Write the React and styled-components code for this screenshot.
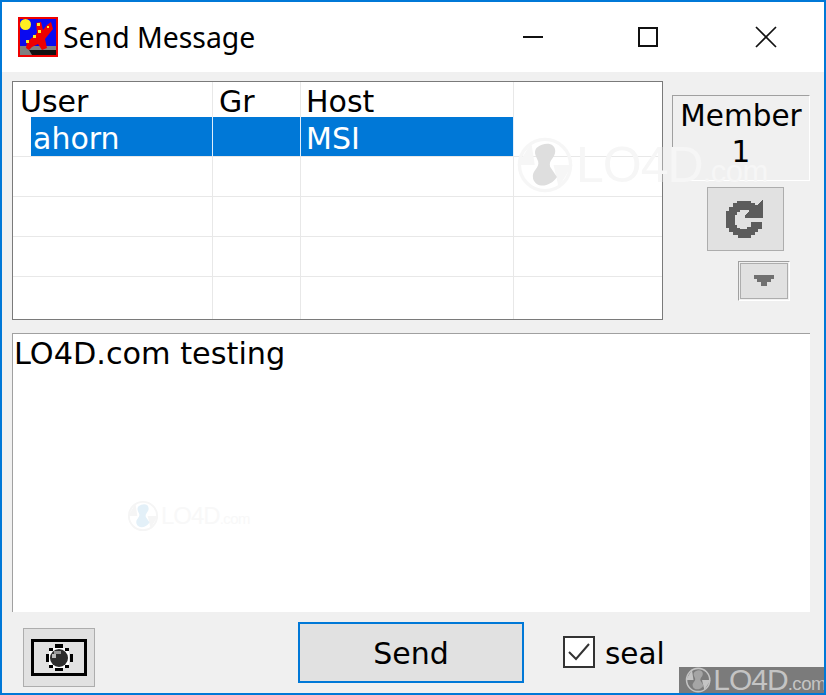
import React from "react";
import styled, { createGlobalStyle } from "styled-components";

const Global = createGlobalStyle`
  html, body { margin: 0; padding: 0; background: #f0f0f0; }
  #root { width: 826px; height: 695px; }
`;

const FONT = `"DejaVu Sans", "Noto Sans", sans-serif`;
const TITLE_FONT = `"Noto Sans", "Open Sans", sans-serif`;

const Win = styled.div`
  position: relative;
  box-sizing: border-box;
  width: 826px;
  height: 695px;
  border: 2px solid #0078d7;
  background: #f0f0f0;
  overflow: hidden;
  font-family: ${FONT};
  color: #000;
  display: flex;
  flex-direction: column;
`;
const TitleBar = styled.div`
  height: 70px;
  background: #fff;
  display: flex;
  align-items: center;
  flex: none;
`;
const AppIcon = styled.svg`
  width: 40px;
  height: 40px;
  margin-left: 16px;
  flex: none;
`;
const Title = styled.div`
  font-family: ${TITLE_FONT};
  font-size: 28.4px;
  line-height: 40px;
  margin-left: 5px;
  flex: 1;
`;
const WinButton = styled.div`
  width: 116px;
  height: 70px;
  display: flex;
  align-items: center;
  justify-content: center;
  padding-right: ${p => p.$shift}px;
  box-sizing: border-box;
`;
const Body = styled.div`
  flex: 1;
  display: flex;
  flex-direction: column;
  padding: 9px 14px 0 10px;
`;
const TopRow = styled.div`
  display: flex;
  height: 239px;
  flex: none;
`;
const Grid = styled.div`
  box-sizing: border-box;
  width: 651px;
  height: 239px;
  border: 1px solid #7a7a7a;
  background: #fff;
  overflow: hidden;
  display: flex;
  flex-direction: column;
`;
const Row = styled.div`
  display: grid;
  grid-template-columns: 200px 88px 213px 1fr;
  grid-template-rows: 1fr;
  flex: none;
  height: ${p => p.$h}px;
  box-sizing: border-box;
  border-bottom: ${p => (p.$line ? "1px solid #e8e8e8" : "none")};
`;
const Cell = styled.div`
  box-sizing: border-box;
  min-height: 0;
  border-right: ${p => (p.$last ? "none" : `1px solid ${p.$sel ? "#dfeefb" : "#e8e8e8"}`)};
  font-size: 30px;
  line-height: ${p => p.$lh}px;
  padding-top: ${p => p.$pt || 0}px;
  padding-left: ${p => p.$pl}px;
  white-space: nowrap;
  color: ${p => (p.$sel ? "#fff" : "#000")};
  background: ${p =>
    p.$sel
      ? p.$indent
        ? "linear-gradient(to right, #fff 18px, #0078d7 18px)"
        : "#0078d7"
      : "transparent"};
`;
const Side = styled.div`
  flex: 1;
  display: flex;
  flex-direction: column;
  padding: 14px 0 0 9px;
`;
const MemberBox = styled.div`
  box-sizing: border-box;
  width: 138px;
  height: 86px;
  border: 1px solid #fff;
  border-top-color: #a0a0a0;
  border-left-color: #a0a0a0;
  text-align: center;
  font-size: 29.5px;
  line-height: 36px;
  padding-top: 2px;
`;
const RefreshButton = styled.div`
  box-sizing: border-box;
  width: 77px;
  height: 64px;
  margin: 6px 0 0 35px;
  padding-right: 3px;
  background: #e1e1e1;
  border: 1px solid #adadad;
  display: flex;
  align-items: center;
  justify-content: center;
`;
const DropFrame = styled.div`
  box-sizing: border-box;
  width: 52px;
  height: 40px;
  margin: 10px 0 0 66px;
  border: 1px solid #fff;
  border-top-color: #a0a0a0;
  border-left-color: #a0a0a0;
  padding: 1px;
`;
const DropInner = styled.div`
  box-sizing: border-box;
  height: 100%;
  background: #e1e1e1;
  border: 1px solid #adadad;
  display: flex;
  align-items: center;
  justify-content: center;
`;
const Memo = styled.div`
  position: relative;
  box-sizing: border-box;
  margin-top: 13px;
  width: 798px;
  height: 279px;
  flex: none;
  background: #fff;
  border-top: 1px solid #a0a0a0;
  border-left: 1px solid #a0a0a0;
  font-size: 30.3px;
  line-height: 40px;
  padding-left: 1px;
`;
const Bottom = styled.div`
  flex: 1;
  display: flex;
  align-items: flex-start;
`;
const CamButton = styled.div`
  box-sizing: border-box;
  width: 72px;
  height: 59px;
  margin: 16px 0 0 11px;
  background: #e1e1e1;
  border: 1px solid #adadad;
  display: flex;
  align-items: center;
  justify-content: center;
`;
const SendButton = styled.div`
  box-sizing: border-box;
  width: 226px;
  height: 61px;
  margin: 10px 0 0 203px;
  padding-top: 2px;
  background: #e1e1e1;
  border: 2px solid #0078d7;
  font-size: 30px;
  display: flex;
  align-items: center;
  justify-content: center;
`;
const CheckWrap = styled.div`
  display: flex;
  align-items: center;
  margin: 24px 0 0 39px;
  height: 32px;
`;
const CheckBox = styled.div`
  box-sizing: border-box;
  width: 32px;
  height: 32px;
  border: 2px solid #333;
  background: #fff;
  display: flex;
  align-items: center;
  justify-content: center;
`;
const CheckLabel = styled.div`
  font-size: 29.5px;
  margin-left: 10px;
  padding-top: 3px;
`;
const Mark = styled.div`
  position: absolute;
  left: ${p => p.$x}px;
  top: ${p => p.$y}px;
  display: flex;
  align-items: center;
  pointer-events: none;
`;
const MarkText = styled.span`
  font-family: "Liberation Sans", sans-serif;
  font-size: ${p => p.$s}px;
  color: ${p => p.$c};
  letter-spacing: -1px;
  margin-left: 2px;
  line-height: 1;
`;
const MarkSmall = styled.span`
  font-size: 0.62em;
  letter-spacing: -0.5px;
`;
const Badge = styled.div`
  position: absolute;
  right: -2px;
  bottom: 0;
  width: 147px;
  height: 26px;
  background: #7b7b7b;
  display: flex;
  align-items: center;
  padding-left: 6px;
  box-sizing: border-box;
`;

const Globe = ({ size, fill, arrow }) => (
  <svg width={size} height={size} viewBox="0 0 34 34">
    <circle cx="17" cy="17" r="15" fill="none" stroke={arrow} strokeWidth="2" />
    <path d="M1 17 L9 4 L11 17 Z M33 17 L25 30 L22 17 Z" fill={arrow} />
    <path d="M12 7 C17 3 23 4 23 9 C23 13 19 14 20 18 L24 24 C20 30 12 31 10 25 C9 20 14 19 13 15 C12 12 10 10 12 7 Z" fill={fill} />
  </svg>
);

const rows = [196, 236, 276];

export default function App() {
  return (
    <Win>
      <Global />
      <TitleBar>
        <AppIcon viewBox="0 0 40 40">
          <rect width="40" height="40" fill="#ee0000" />
          <rect x="2" y="2" width="36" height="36" fill="#0a0af0" />
          <rect x="2" y="29" width="36" height="9" fill="#808080" />
          <circle cx="7.5" cy="7.5" r="5.5" fill="#ffee22" />
          <path d="M11 33 L38 33 L38 38 L14 38 Z" fill="#111" />
          <path d="M8 31 L9 25 L16 19 L19 16 L18 6 L23 5 L25 13 L29 8 L33 5 L35 12 L27 22 L29 31 L24 33 L20 27 L14 30 L11 33 Z" fill="#ee0000" />
          <rect x="19" y="6" width="3" height="3" fill="#ffee22" />
          <rect x="20" y="13" width="3" height="3" fill="#ffee22" />
          <rect x="15" y="18" width="3" height="3" fill="#ffee22" />
          <rect x="8" y="23" width="3" height="3" fill="#ffee22" />
          <rect x="29" y="9" width="2" height="2" fill="#ffee22" />
        </AppIcon>
        <Title>Send Message</Title>
        <WinButton $shift={3}>
          <svg width="22" height="22" viewBox="0 0 22 22"><rect x="1" y="10" width="20" height="2" fill="#111" /></svg>
        </WinButton>
        <WinButton $shift={4}>
          <svg width="22" height="22" viewBox="0 0 22 22"><rect x="2" y="2" width="18" height="18" fill="none" stroke="#111" strokeWidth="2" /></svg>
        </WinButton>
        <WinButton $shift={0}>
          <svg width="22" height="22" viewBox="0 0 22 22"><path d="M1 1 L21 21 M21 1 L1 21" stroke="#111" strokeWidth="1.7" /></svg>
        </WinButton>
      </TitleBar>
      <Body>
        <TopRow>
          <Grid>
            <Row $h={35}>
              <Cell $lh={34} $pt={3} $pl={7}>User</Cell>
              <Cell $lh={34} $pt={3} $pl={6}>Gr</Cell>
              <Cell $lh={34} $pt={3} $pl={5}>Host</Cell>
              <Cell $last />
            </Row>
            <Row $h={40} $line>
              <Cell $sel $indent $lh={35} $pt={4} $pl={20}>ahorn</Cell>
              <Cell $sel />
              <Cell $sel $lh={35} $pt={4} $pl={5}>MSI</Cell>
              <Cell $last />
            </Row>
            {rows.map(r => (
              <Row key={r} $h={40} $line>
                <Cell /><Cell /><Cell /><Cell $last />
              </Row>
            ))}
            <Row $h={44}>
              <Cell /><Cell /><Cell /><Cell $last />
            </Row>
          </Grid>
          <Side>
            <MemberBox>Member<br />1</MemberBox>
            <RefreshButton>
              <svg width="38" height="39" viewBox="0 0 38 39" shapeRendering="crispEdges">
                <path d="M37 22 L37 29 L33 29 L33 32 L30 32 L30 35 L26 35 L26 38 L13 38 L13 35 L8 35 L8 32 L4 32 L4 28 L1 28 L1 11 L4 11 L4 7 L8 7 L8 3 L12 3 L12 1 L26 1 L26 3 L30 3 L30 5 L33 5 L37 0 L38 1 L38 18 L20 18 L20 15 L24 12 L24 10 L15 10 L15 12 L12 12 L12 15 L10 15 L10 25 L12 25 L12 28 L15 28 L15 29 L22 29 L22 27 L26 27 L26 22 Z" fill="#5c5c5c" />
              </svg>
            </RefreshButton>
            <DropFrame>
              <DropInner>
                <svg width="22" height="14" viewBox="0 0 22 14" shapeRendering="crispEdges">
                  <path d="M1 1 H21 V5 H18 V8 H14 V12 H8 V8 H4 V5 H1 Z" fill="#707070" />
                </svg>
              </DropInner>
            </DropFrame>
          </Side>
        </TopRow>
        <Memo>
          LO4D.com testing
          <Mark $x={114} $y={166}>
            <Globe size={32} fill="#e3f0f8" arrow="#f5f5f5" />
            <MarkText $s={24} $c="#f8f8f8">LO4D<MarkSmall>.com</MarkSmall></MarkText>
          </Mark>
        </Memo>
        <Bottom>
          <CamButton>
            <svg width="56" height="37" viewBox="0 0 56 37" shapeRendering="crispEdges">
              <rect x="1.5" y="1.5" width="53" height="34" fill="#e1e1e1" stroke="#000" strokeWidth="3" />
              <rect x="24" y="5" width="8" height="4" fill="#000" />
              <rect x="24" y="28" width="8" height="4" fill="#000" />
              <rect x="15" y="15" width="3" height="8" fill="#000" />
              <rect x="39" y="15" width="3" height="8" fill="#000" />
              <rect x="18" y="9" width="20" height="20" fill="#fff" />
              <rect x="18" y="9" width="4" height="3" fill="#000" />
              <rect x="34" y="9" width="4" height="3" fill="#000" />
              <rect x="18" y="26" width="4" height="3" fill="#000" />
              <rect x="34" y="26" width="4" height="3" fill="#000" />
              <circle cx="28" cy="19" r="9" fill="#2e2e2e" shapeRendering="auto" />
              <rect x="23" y="12" width="7" height="3" fill="#999" />
              <rect x="21" y="15" width="4" height="4" fill="#bbb" />
            </svg>
          </CamButton>
          <SendButton>Send</SendButton>
          <CheckWrap>
            <CheckBox>
              <svg width="24" height="20" viewBox="0 0 24 20">
                <path d="M2 10 L9 17 L22 2" fill="none" stroke="#333" strokeWidth="2" />
              </svg>
            </CheckBox>
            <CheckLabel>seal</CheckLabel>
          </CheckWrap>
        </Bottom>
      </Body>
      <Mark $x={514} $y={134}>
        <Globe size={58} fill="#dedede" arrow="#f6f6f6" />
        <MarkText $s={50} $c="#f6f6f6">LO4D<MarkSmall>.com</MarkSmall></MarkText>
      </Mark>
      <Badge>
        <Globe size={32} fill="#a5a5a5" arrow="#c4c4c4" />
        <MarkText $s={30} $c="#c4c4c4">LO4D<MarkSmall>.com</MarkSmall></MarkText>
      </Badge>
    </Win>
  );
}
